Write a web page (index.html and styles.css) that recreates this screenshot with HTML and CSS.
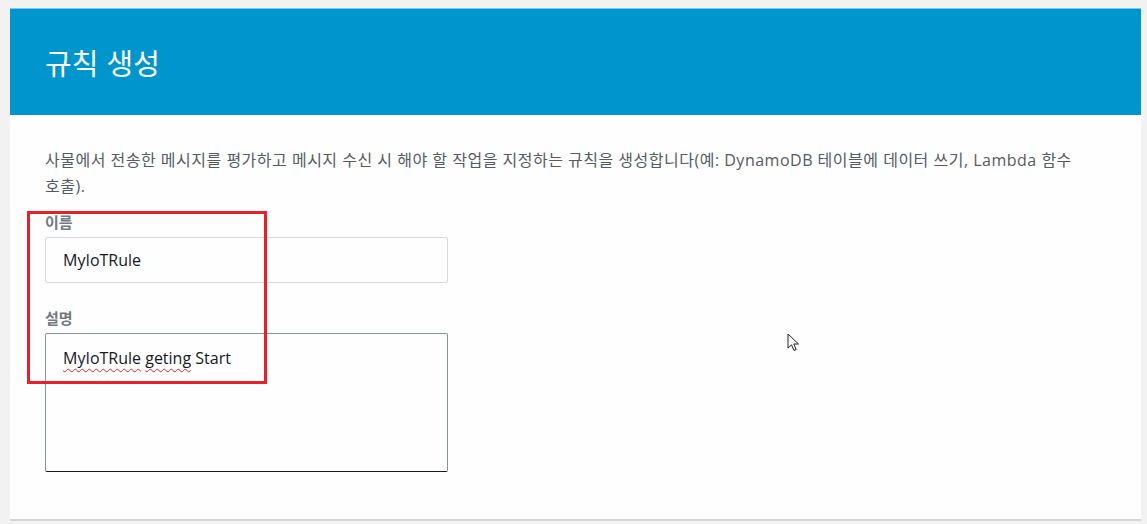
FILE: index.html
```html
<!DOCTYPE html>
<html lang="ko">
<head>
<meta charset="utf-8">
<link rel="stylesheet" href="styles.css">
</head>
<body>
<div class="card">
  <div class="card-header"><h1 class="title">규칙 생성</h1></div>
  <div class="card-body">
    <p class="desc">사물에서 전송한 메시지를 평가하고 메시지 수신 시 해야 할 작업을 지정하는 규칙을 생성합니다(예: DynamoDB 테이블에 데이터 쓰기, Lambda 함수 호출).</p>
    <div class="field">
      <label class="label">이름</label>
      <div class="input">MyIoTRule</div>
    </div>
    <div class="field field-second">
      <label class="label">설명</label>
      <div class="textarea"><span class="spell">MyIoTRule</span> <span class="spell">geting</span> Start</div>
    </div>
    <div class="highlight"></div>
    <svg class="cursor" width="13" height="20" viewBox="0 0 13 20"><path d="M1 1 L1 15 L4.5 11.8 L7 17.5 L9.2 16.6 L6.8 11 L11.5 11 Z" fill="#fff" stroke="#222" stroke-width="1" stroke-linejoin="round"/></svg>
  </div>
</div>
</body>
</html>
```

FILE: styles.css
```css
html, body {
  margin: 0;
  padding: 0;
  background: #f2f2f2;
}
body {
  padding: 8px 6px 0 10px;
  font-family: "Open Sans", "Noto Sans CJK KR", sans-serif;
}
.card {
  background: #fefefe;
  border-bottom: 2px solid #d5d5d5;
}
.card-header {
  height: 106px;
  background: #0095cc;
  border-top: 1px solid #6fd0ee;
  display: flex;
  align-items: center;
  padding-left: 35px;
}
.title {
  margin: 0;
  color: #ffffff;
  font-size: 29px;
  font-weight: 400;
  font-family: "Noto Sans CJK KR", sans-serif;
  line-height: 1;
}
.card-body {
  position: relative;
  padding: 32px 35px 47px 35px;
}
.desc {
  margin: 0;
  color: #545b64;
  font-size: 16px;
  line-height: 26px;
  letter-spacing: 0.5px;
  word-break: keep-all;
}
.field {
  margin-top: 12px;
  display: flex;
  flex-direction: column;
  gap: 4px;
}
.field-second {
  margin-top: 24px;
}
.label {
  color: #737980;
  font-size: 15px;
  font-weight: 700;
  line-height: 22px;
}
.input {
  width: 403px;
  height: 46px;
  box-sizing: border-box;
  border: 1px solid #d7dadb;
  border-radius: 2px;
  padding: 0 17px;
  display: flex;
  align-items: center;
  color: #16191f;
  font-size: 16px;
}
.textarea {
  width: 403px;
  height: 139px;
  box-sizing: border-box;
  border: 1px solid #879596;
  border-bottom-color: #16191f;
  border-radius: 2px;
  padding: 13px 17px;
  color: #16191f;
  font-size: 16px;
  line-height: 22px;
}
.spell {
  text-decoration: underline wavy #e0242c;
  text-decoration-thickness: 1px;
  text-underline-offset: 4px;
}
.highlight {
  position: absolute;
  left: 17px;
  top: 96px;
  width: 234px;
  height: 167px;
  border: 3px solid #e8202a;
}
.cursor {
  position: absolute;
  left: 777px;
  top: 218px;
}
```
